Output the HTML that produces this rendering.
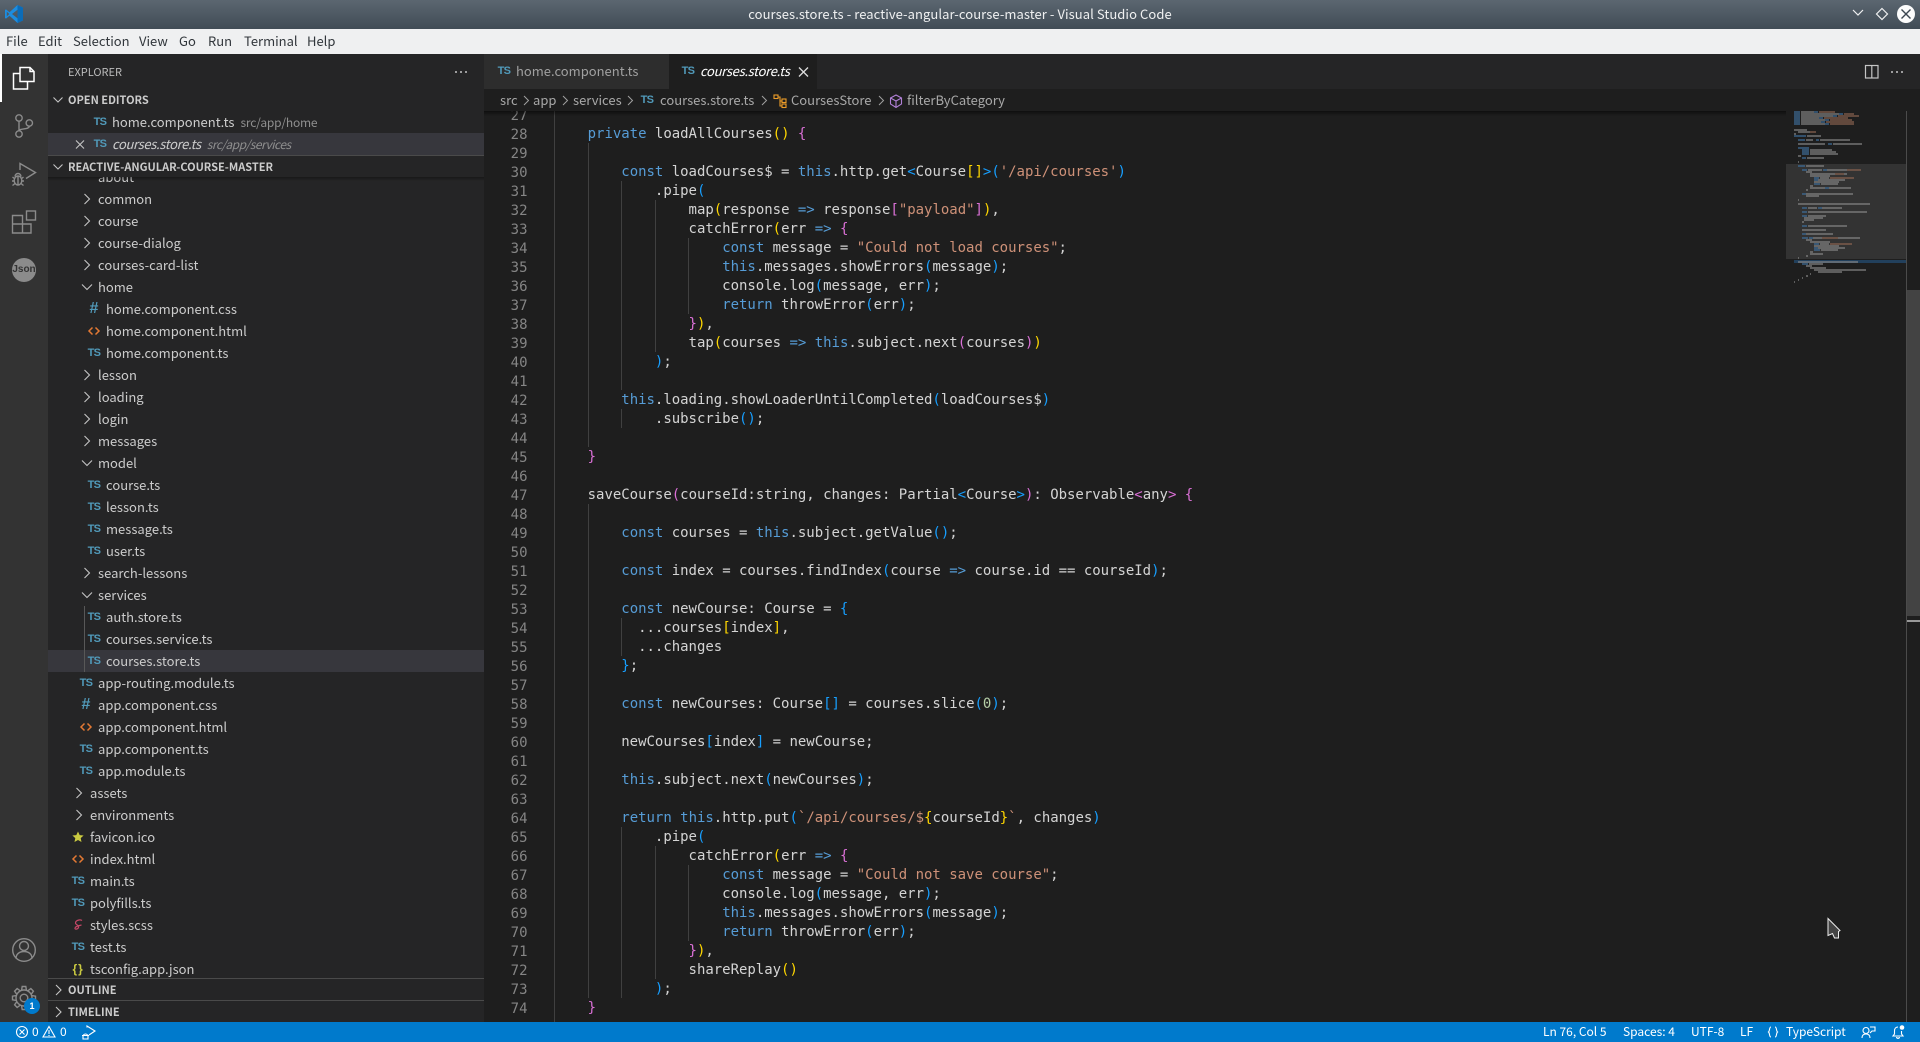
<!DOCTYPE html>
<html><head><meta charset="utf-8"><title>courses.store.ts - VS Code</title>
<style>
html,body{margin:0;padding:0;width:1920px;height:1042px;overflow:hidden;background:#1e1e1e}
body{position:relative;font-family:"Noto Sans CJK JP","Liberation Sans",sans-serif;font-size:13px;color:#ccc}
.a{position:absolute;white-space:pre}
svg{position:absolute;overflow:visible}
#title{left:0;top:0;width:1920px;height:29px;background:linear-gradient(#5b6670,#414c56)}
#menu{left:0;top:29px;width:1920px;height:25px;background:#eff0f1;color:#31363b}
#menu span{position:absolute;top:0;line-height:24px}
#act{left:0;top:54px;width:48px;height:968px;background:#333}
#side{left:48px;top:54px;width:436px;height:968px;background:#252526}
.hd{font-weight:700;font-size:11px;color:#ccc;line-height:22px;height:22px}
.sel{background:#37373d}
#tree{left:48px;top:177px;width:436px;height:801px;overflow:hidden}
.r{position:absolute;left:0;width:436px;height:22px;line-height:22px}
.r span{position:absolute;top:0;white-space:pre}
.ts{font:700 11px/23px "Liberation Sans",sans-serif;letter-spacing:-.6px;color:#519aba;width:20px;text-align:center}
.hash{font:700 16px/22px "Liberation Sans",sans-serif;color:#519aba;width:20px;text-align:center}
.d3{left:58px}.d2{left:50px}.d1{left:42px}
.i3{left:36px}.i2{left:28px}.i1{left:20px}
#tabs{left:484px;top:54px;width:1436px;height:35px;background:#252526}
#bc{left:484px;top:89px;width:1436px;height:22px;background:#1e1e1e;color:#a8a8a8}
#bc span{position:absolute;top:0;line-height:22px;white-space:pre}
#code{left:484px;top:111px;width:1302px;height:911px;overflow:hidden;background:#1e1e1e}
pre{position:absolute;margin:0;font:14px/19px "DejaVu Sans Mono","Liberation Mono",monospace;top:-4px}
#nums{left:0;width:43.5px;text-align:right;color:#858585}
#src{left:70px;top:-5px;color:#d4d4d4;letter-spacing:-.02px}
.k{color:#569cd6}.s{color:#ce9178}.g{color:#ffd700}.p{color:#da70d6}.b{color:#179fff}.n{color:#b5cea8}
.gd{position:absolute;width:1px;background:#404040}
#status{left:0;top:1022px;width:1920px;height:20px;background:#007acc;color:#fff;font-size:12px}
#status span{position:absolute;top:0;line-height:20px;white-space:pre}
</style></head><body>

<div class="a" id="title"></div>
<svg style="left:0;top:0" width="30" height="29"><path fill="#1c8de0" fill-rule="evenodd" d="M17.5 5L23 7.6V20.4L17.5 23L9.5 15.8L6 18.6L5 18V10L6 9.4L9.5 12.2ZM17.5 9.8L12 14L17.5 18.2ZM6.8 11.6V16.4L9.3 14Z"/><path fill="#0b6cb8" d="M17.5 5L23 7.6V20.4L17.5 23Z"/></svg>
<div class="a" style="left:0;top:0;width:1920px;text-align:center;line-height:28px;color:#eff0f1;letter-spacing:.07px">courses.store.ts - reactive-angular-course-master - Visual Studio Code</div>
<svg style="left:1840px;top:0" width="80" height="29">
<path d="M13 10.5L18 15.5L23 10.5" transform="translate(0,-.5)" fill="none" stroke="#eff0f1" stroke-width="1.2"/>
<path d="M42 8.5L47.5 14L42 19.5L36.5 14Z" fill="none" stroke="#eff0f1" stroke-width="1.2"/>
<circle cx="66" cy="14" r="9" fill="#fcfcfc"/><path d="M61.5 9.5L70.5 18.5M70.5 9.5L61.5 18.5" stroke="#3c4650" stroke-width="1.4"/>
</svg>

<div class="a" id="menu">
<span style="left:6px">File</span><span style="left:38px">Edit</span><span style="left:73px">Selection</span><span style="left:139px">View</span><span style="left:179px">Go</span><span style="left:208px">Run</span><span style="left:244px">Terminal</span><span style="left:307px">Help</span>
</div>

<div class="a" id="act"></div>
<div class="a" style="left:0;top:54px;width:2px;height:48px;background:#fff"></div>
<svg style="left:0;top:0" width="48" height="1022" fill="none">
<g stroke="#fff" stroke-width="1.5"><path d="M20 67.5H30L34 71.5V81.5H20Z"/><path d="M30 67.5V71.5H34"/><path d="M20 73.5H13.5V89H27.5V81.5"/></g>
<g stroke="#8b8b8b" stroke-width="1.4">
<circle cx="19" cy="118" r="3.2"/><circle cx="19" cy="134" r="3.2"/><circle cx="29.3" cy="123" r="3.2"/><path d="M19 121.2V130.8M29.3 126.2C29.3 130 19 128 19 131"/>
<path d="M20 170V163.5L35.5 172.5L26 178.5"/><ellipse cx="18" cy="180.5" rx="3.8" ry="4.5"/><path d="M15 176.5A3 3 0 0 1 21 176.5M12.5 177L15 179M23.5 177L21 179M12 181H14.2M24 181H21.8M12.5 185.5L15 183.5M23.5 185.5L21 183.5M18 176V185"/>
<path d="M12.5 215.5H22.5V224H31V233H12.5ZM12.5 224H22.5V233"/><rect x="26.5" y="211" width="9" height="9"/>
<circle cx="24" cy="950" r="11.3"/><circle cx="24" cy="946" r="4.5"/><path d="M16 958.5C16 954 19.5 951.5 24 951.5S32 954 32 958.5"/>
<circle cx="24" cy="998" r="3.8"/><circle cx="24" cy="998" r="8"/>
<g transform="translate(24 998)"><path d="M-2.4 -8L-1.8 -11.5H1.8L2.4 -8"/><path d="M-2.4 -8L-1.8 -11.5H1.8L2.4 -8" transform="rotate(45)"/><path d="M-2.4 -8L-1.8 -11.5H1.8L2.4 -8" transform="rotate(90)"/><path d="M-2.4 -8L-1.8 -11.5H1.8L2.4 -8" transform="rotate(135)"/><path d="M-2.4 -8L-1.8 -11.5H1.8L2.4 -8" transform="rotate(180)"/><path d="M-2.4 -8L-1.8 -11.5H1.8L2.4 -8" transform="rotate(225)"/><path d="M-2.4 -8L-1.8 -11.5H1.8L2.4 -8" transform="rotate(270)"/><path d="M-2.4 -8L-1.8 -11.5H1.8L2.4 -8" transform="rotate(315)"/></g>
</g>
<circle cx="24" cy="270" r="12" fill="#8b8b8b"/>
<circle cx="32" cy="1006" r="8" fill="#007acc"/>
</svg>
<div class="a" style="left:12px;top:260px;width:24px;text-align:center;font:700 10px/20px 'Liberation Sans',sans-serif;color:#333">Json</div>
<div class="a" style="left:24px;top:996px;width:16px;text-align:center;font:700 9px/20px 'Liberation Sans',sans-serif;color:#fff">1</div>

<div class="a" id="side"></div>
<div class="a" style="left:68px;top:54px;line-height:36px;font-size:11px;color:#bbb">EXPLORER</div>
<svg style="left:0;top:0" width="484" height="1022">
<g fill="#c5c5c5"><circle cx="456" cy="72" r="1"/><circle cx="461" cy="72" r="1"/><circle cx="466" cy="72" r="1"/></g>
</svg>
<div class="a hd" style="left:68px;top:89px">OPEN EDITORS</div>
<div class="a" style="left:48px;top:133px;width:436px;height:22px;background:#37373d"></div>
<div class="a ts" style="left:90px;top:111px">TS</div>
<div class="a" style="left:112px;top:111px;line-height:22px">home.component.ts<span style="color:#8f8f8f;margin-left:6px;font-size:12px;letter-spacing:-.2px">src/app/home</span></div>
<div class="a ts" style="left:90px;top:133px">TS</div>
<div class="a" style="left:112px;top:133px;line-height:22px;font-style:italic;letter-spacing:-.35px">courses.store.ts<span style="color:#8f8f8f;margin-left:6px;font-size:12px;letter-spacing:-.5px">src/app/services</span></div>
<div class="a" style="left:48px;top:155px;width:436px;height:1px;background:#4a4a4a"></div>
<div class="a hd" style="left:68px;top:156px">REACTIVE-ANGULAR-COURSE-MASTER</div>
<svg style="left:0;top:0" width="484" height="180" fill="none" stroke="#c5c5c5" stroke-width="1.1">
<path d="M53.5 97.5L58 102L62.5 97.5M53.5 164.5L58 169L62.5 164.5M76 140.5L84 148.5M84 140.5L76 148.5"/>
</svg>

<div class="a" id="tree">
<div class="r" style="top:-11px"><span class="d2">about</span></div>
<div class="r" style="top:11px"><span class="d2">common</span></div>
<div class="r" style="top:33px"><span class="d2">course</span></div>
<div class="r" style="top:55px"><span class="d2">course-dialog</span></div>
<div class="r" style="top:77px"><span class="d2">courses-card-list</span></div>
<div class="r" style="top:99px"><span class="d2">home</span></div>
<div class="r" style="top:121px"><span class="hash i3">#</span><span class="d3">home.component.css</span></div>
<div class="r" style="top:143px"><span class="d3">home.component.html</span></div>
<div class="r" style="top:165px"><span class="ts i3">TS</span><span class="d3">home.component.ts</span></div>
<div class="r" style="top:187px"><span class="d2">lesson</span></div>
<div class="r" style="top:209px"><span class="d2">loading</span></div>
<div class="r" style="top:231px"><span class="d2">login</span></div>
<div class="r" style="top:253px"><span class="d2">messages</span></div>
<div class="r" style="top:275px"><span class="d2">model</span></div>
<div class="r" style="top:297px"><span class="ts i3">TS</span><span class="d3">course.ts</span></div>
<div class="r" style="top:319px"><span class="ts i3">TS</span><span class="d3">lesson.ts</span></div>
<div class="r" style="top:341px"><span class="ts i3">TS</span><span class="d3">message.ts</span></div>
<div class="r" style="top:363px"><span class="ts i3">TS</span><span class="d3">user.ts</span></div>
<div class="r" style="top:385px"><span class="d2">search-lessons</span></div>
<div class="r" style="top:407px"><span class="d2">services</span></div>
<div class="r" style="top:429px"><span class="ts i3">TS</span><span class="d3">auth.store.ts</span></div>
<div class="r" style="top:451px"><span class="ts i3">TS</span><span class="d3">courses.service.ts</span></div>
<div class="r sel" style="top:473px"><span class="ts i3">TS</span><span class="d3">courses.store.ts</span></div>
<div class="r" style="top:495px"><span class="ts i2">TS</span><span class="d2">app-routing.module.ts</span></div>
<div class="r" style="top:517px"><span class="hash i2">#</span><span class="d2">app.component.css</span></div>
<div class="r" style="top:539px"><span class="d2">app.component.html</span></div>
<div class="r" style="top:561px"><span class="ts i2">TS</span><span class="d2">app.component.ts</span></div>
<div class="r" style="top:583px"><span class="ts i2">TS</span><span class="d2">app.module.ts</span></div>
<div class="r" style="top:605px"><span class="d1">assets</span></div>
<div class="r" style="top:627px"><span class="d1">environments</span></div>
<div class="r" style="top:649px"><span class="d1">favicon.ico</span></div>
<div class="r" style="top:671px"><span class="d1">index.html</span></div>
<div class="r" style="top:693px"><span class="ts i1">TS</span><span class="d1">main.ts</span></div>
<div class="r" style="top:715px"><span class="ts i1">TS</span><span class="d1">polyfills.ts</span></div>
<div class="r" style="top:737px"><span class="d1">styles.scss</span></div>
<div class="r" style="top:759px"><span class="ts i1">TS</span><span class="d1">test.ts</span></div>
<div class="r" style="top:781px"><span class="d1">tsconfig.app.json</span><span style="left:24.5px;font:700 12px/22px 'Liberation Sans',sans-serif;letter-spacing:1px;color:#cbcb41">{}</span></div>
<svg style="left:0;top:0" width="436" height="801" fill="none">
<path stroke="#585858" d="M36.5 429V495"/>
<path stroke="#c5c5c5" stroke-width="1.1" d="M36.5 17L41.5 22L36.5 27M36.5 39L41.5 44L36.5 49M36.5 61L41.5 66L36.5 71M36.5 83L41.5 88L36.5 93M34 107.5L39 112.5L44 107.5M36.5 193L41.5 198L36.5 203M36.5 215L41.5 220L36.5 225M36.5 237L41.5 242L36.5 247M36.5 259L41.5 264L36.5 269M34 283.5L39 288.5L44 283.5M36.5 391L41.5 396L36.5 401M34 415.5L39 420.5L44 415.5M28.5 611L33.5 616L28.5 621M28.5 633L33.5 638L28.5 643"/>
<g stroke="#e37933" stroke-width="1.5"><path d="M44.5 150.5L41 154L44.5 157.5M47.5 150.5L51 154L47.5 157.5"/><path d="M36.5 546.5L33 550L36.5 553.5M39.5 546.5L43 550L39.5 553.5"/><path d="M28.5 678.5L25 682L28.5 685.5M31.5 678.5L35 682L31.5 685.5"/></g>
<path fill="#cbcb41" d="M30 654.5l1.7 3.6 3.9.4-2.9 2.6.8 3.9-3.5-2-3.5 2 .8-3.9-2.9-2.6 3.9-.4z"/>
<path stroke="#c44766" stroke-width="1.2" d="M34 743.5c-2-1.5-6.5 0-6.5 2.5c0 2 4 2 3 4.5c-.8 2-4 2.2-3.5.5c.4-1.5 4-2.5 6.5-3"/>
</svg>
</div>
<div class="a" style="left:48px;top:177px;width:436px;height:4px;background:linear-gradient(rgba(0,0,0,.35),rgba(0,0,0,0))"></div>

<div class="a" style="left:48px;top:978px;width:436px;height:44px;background:#252526"></div>
<div class="a" style="left:48px;top:978px;width:436px;height:1px;background:#4a4a4a"></div>
<div class="a" style="left:48px;top:1000px;width:436px;height:1px;background:#4a4a4a"></div>
<div class="a hd" style="left:68px;top:979px">OUTLINE</div>
<div class="a hd" style="left:68px;top:1001px">TIMELINE</div>
<svg style="left:0;top:0" width="484" height="1022" fill="none" stroke="#c5c5c5" stroke-width="1.1"><path d="M56 985L61 990L56 995M56 1007L61 1012L56 1017"/></svg>

<div class="a" id="tabs"></div>
<div class="a" style="left:484px;top:54px;width:185px;height:35px;background:#2d2d2d"></div>
<div class="a" style="left:669px;top:54px;width:148px;height:35px;background:#1e1e1e"></div>
<div class="a ts" style="left:494px;top:60px">TS</div>
<div class="a" style="left:516px;top:54px;line-height:34px;color:#a0a0a0">home.component.ts</div>
<div class="a ts" style="left:678px;top:60px">TS</div>
<div class="a" style="left:700px;top:54px;line-height:34px;color:#fff;font-style:italic;letter-spacing:-.3px">courses.store.ts</div>
<svg style="left:0;top:0" width="1920" height="90" fill="none">
<path stroke="#ddd" stroke-width="1.3" d="M799 67.5L808 76.5M808 67.5L799 76.5"/>
<rect x="1865.5" y="65.5" width="12.5" height="12.5" stroke="#c5c5c5" stroke-width="1.2"/><path stroke="#c5c5c5" stroke-width="1.2" d="M1871.8 65.5V78"/>
<g fill="#c5c5c5"><circle cx="1892" cy="72" r="1"/><circle cx="1897" cy="72" r="1"/><circle cx="1902" cy="72" r="1"/></g>
</svg>

<div class="a" id="bc">
<span style="left:16px">src</span><span style="left:49px">app</span><span style="left:89px">services</span>
<span class="ts" style="left:153px;top:0;line-height:22px">TS</span>
<span style="left:176px">courses.store.ts</span><span style="left:307px">CoursesStore</span><span style="left:423px">filterByCategory</span>
</div>
<svg style="left:0;top:0" width="1100" height="112" fill="none">
<path stroke="#a0a0a0" stroke-width="1" d="M524 96L528.5 100.5L524 105M563 96L567.5 100.5L563 105M628 96L632.5 100.5L628 105M762 96L766.5 100.5L762 105M879 96L883.5 100.5L879 105"/>
<g stroke="#ee9d28" stroke-width="1.1"><rect x="774" y="95" width="4" height="3.5"/><rect x="782" y="99" width="4" height="3.5"/><rect x="782" y="104" width="4" height="3.5"/><path d="M778 97H780V106H782M780 101H782"/></g>
<path stroke="#b180d7" stroke-width="1.1" d="M896 95L901.5 98V104L896 107.5L890.5 104V98ZM890.5 98L896 101L901.5 98M896 101V107.5"/>
</svg>

<div class="a" id="code">
<pre id="nums">27
28
29
30
31
32
33
34
35
36
37
38
39
40
41
42
43
44
45
46
47
48
49
50
51
52
53
54
55
56
57
58
59
60
61
62
63
64
65
66
67
68
69
70
71
72
73
74</pre>
<div class="gd" style="left:70px;top:0;height:911px"></div>
<div class="gd" style="left:104px;top:32px;height:304px"></div>
<div class="gd" style="left:104px;top:393px;height:494px"></div>
<div class="gd" style="left:137px;top:70px;height:209px"></div>
<div class="gd" style="left:137px;top:298px;height:19px"></div>
<div class="gd" style="left:137px;top:507px;height:38px"></div>
<div class="gd" style="left:137px;top:716px;height:171px"></div>
<div class="gd" style="left:171px;top:89px;height:152px"></div>
<div class="gd" style="left:171px;top:735px;height:133px"></div>
<div class="gd" style="left:204px;top:127px;height:76px"></div>
<div class="gd" style="left:204px;top:754px;height:76px"></div>
<pre id="src">

    <span class="k">private</span> loadAllCourses<span class="g">()</span> <span class="p">{</span>

        <span class="k">const</span> loadCourses$ = <span class="k">this</span>.http.get<span class="b">&lt;</span>Course<span class="g">[]</span><span class="b">&gt;(</span><span class="s">'/api/courses'</span><span class="b">)</span>
            .pipe<span class="b">(</span>
                map<span class="g">(</span>response <span class="k">=&gt;</span> response<span class="p">[</span><span class="s">"payload"</span><span class="p">]</span><span class="g">)</span>,
                catchError<span class="g">(</span>err <span class="k">=&gt;</span> <span class="p">{</span>
                    <span class="k">const</span> message = <span class="s">"Could not load courses"</span>;
                    <span class="k">this</span>.messages.showErrors<span class="b">(</span>message<span class="b">)</span>;
                    console.log<span class="b">(</span>message, err<span class="b">)</span>;
                    <span class="k">return</span> throwError<span class="b">(</span>err<span class="b">)</span>;
                <span class="p">}</span><span class="g">)</span>,
                tap<span class="g">(</span>courses <span class="k">=&gt;</span> <span class="k">this</span>.subject.next<span class="p">(</span>courses<span class="p">)</span><span class="g">)</span>
            <span class="b">)</span>;

        <span class="k">this</span>.loading.showLoaderUntilCompleted<span class="b">(</span>loadCourses$<span class="b">)</span>
            .subscribe<span class="b">()</span>;

    <span class="p">}</span>

    saveCourse<span class="p">(</span>courseId:string, changes: Partial<span class="b">&lt;</span>Course<span class="b">&gt;</span><span class="p">)</span>: Observable<span class="p">&lt;</span>any<span class="p">&gt;</span> <span class="p">{</span>

        <span class="k">const</span> courses = <span class="k">this</span>.subject.getValue<span class="b">()</span>;

        <span class="k">const</span> index = courses.findIndex<span class="b">(</span>course <span class="k">=&gt;</span> course.id == courseId<span class="b">)</span>;

        <span class="k">const</span> newCourse: Course = <span class="b">{</span>
          ...courses<span class="g">[</span>index<span class="g">]</span>,
          ...changes
        <span class="b">}</span>;

        <span class="k">const</span> newCourses: Course<span class="b">[]</span> = courses.slice<span class="b">(</span><span class="n">0</span><span class="b">)</span>;

        newCourses<span class="b">[</span>index<span class="b">]</span> = newCourse;

        <span class="k">this</span>.subject.next<span class="b">(</span>newCourses<span class="b">)</span>;

        <span class="k">return</span> <span class="k">this</span>.http.put<span class="b">(</span><span class="s">`/api/courses/$</span><span class="g">{</span>courseId<span class="g">}</span><span class="s">`</span>, changes<span class="b">)</span>
            .pipe<span class="b">(</span>
                catchError<span class="g">(</span>err <span class="k">=&gt;</span> <span class="p">{</span>
                    <span class="k">const</span> message = <span class="s">"Could not save course"</span>;
                    console.log<span class="b">(</span>message, err<span class="b">)</span>;
                    <span class="k">this</span>.messages.showErrors<span class="b">(</span>message<span class="b">)</span>;
                    <span class="k">return</span> throwError<span class="b">(</span>err<span class="b">)</span>;
                <span class="p">}</span><span class="g">)</span>,
                shareReplay<span class="g">()</span>
            <span class="b">)</span>;
    <span class="p">}</span></pre>
</div>
<div class="a" style="left:484px;top:111px;width:1302px;height:5px;background:linear-gradient(rgba(0,0,0,.5),rgba(0,0,0,0))"></div>

<div class="a" style="left:1786px;top:164px;width:120px;height:95px;background:#333"></div>
<div class="a" style="left:1794px;top:260px;width:112px;height:3px;background:#22405c"></div>
<svg style="left:1794px;top:0" width="112" height="290" fill="none" stroke-width="1.2">
<path stroke="#3f6f9b" d="M0 112h6M20 112h4M0 114h6M45 114h4M0 116h6M39 116h4M0 118h6M25 118h4M0 120h6M31 120h4M0 122h6M27 122h4M0 124h6M31 124h4M0 136h12M4 140h7M22 140h3M34 144h4M4 148h11M8 150h7M8 152h7M8 154h7M8 158h4M4 166h7M8 170h5M29 170h4M20 178h5M20 180h4M20 184h6M31 188h4M8 194h4M8 208h5M24 208h4M8 212h5M8 216h5M8 226h5M8 234h4M8 238h6M15 238h4M20 244h5M20 248h4M20 250h6M8 264h6"/>
<path stroke="#858585" d="M7 112h13M7 114h38M7 116h32M7 118h18M7 120h24M7 122h20M7 124h24M0 130h13M4 132h12M0 134h2M13 136h14M12 140h7M26 140h30M4 144h27M39 144h29M16 150h22M16 152h26M16 154h28M4 156h3M13 158h17M4 162h1M12 166h18M14 170h14M33 170h20M12 172h6M16 174h25M50 174h3M16 176h20M26 178h9M24 180h27M20 182h25M27 184h17M16 186h3M16 188h15M35 188h22M12 190h2M12 194h47M12 196h13M4 200h1M4 204h72M14 208h9M28 208h20M14 212h59M14 216h18M10 218h19M10 220h10M8 222h2M14 226h39M8 230h24M12 234h27M19 238h9M44 238h22M12 240h6M16 242h20M26 244h9M20 246h25M24 248h27M27 250h17M16 252h3M16 254h13M12 256h2M4 258h1M4 262h60M15 264h14M12 266h6M16 268h16M20 270h52M24 272h24M16 274h1M12 276h2M8 278h1M4 280h1M0 282h1"/>
<path stroke="#8a6350" d="M25 112h16M50 114h10M44 116h21M30 118h24M36 120h22M32 122h28M36 124h24M16 132h6M53 170h14M41 174h9M36 178h24M28 238h16M36 244h22"/>
</svg>

<div class="a" style="left:1906px;top:111px;width:1px;height:911px;background:#4b4b4b"></div>
<div class="a" style="left:1907px;top:290px;width:13px;height:326px;background:#434343"></div>
<div class="a" style="left:1907px;top:620px;width:13px;height:2px;background:#999"></div>

<svg style="left:0;top:0" width="1920" height="1022"><path fill="#444" stroke="#eee" stroke-width="1" d="M1828 918.5V935.5L1832.5 933.5L1834.5 938H1838.5V931.5L1840 930.5Z"/></svg>

<div class="a" id="status">
<span style="left:32px">0</span><span style="left:60px">0</span>
<span style="left:1543px">Ln 76, Col 5</span><span style="left:1623px">Spaces: 4</span><span style="left:1691px">UTF-8</span><span style="left:1740px">LF</span><span style="left:1786px">TypeScript</span>
</div>
<svg style="left:0;top:1022px" width="1920" height="20" fill="none" stroke="#fff" stroke-width="1.1">
<circle cx="22" cy="10" r="5.5"/><path d="M19.5 7.5L24.5 12.5M24.5 7.5L19.5 12.5"/>
<path d="M49 4.5L55 15H43ZM49 8V12M49 13V14"/>
<path d="M87 5.5V4L95 9L89 13M83 14.5A2.5 2.5 0 0 1 88 14.5V17H83ZM82 13.5L89 13.5"/>
<path d="M1771 5C1769 5 1770 9 1768.5 10C1770 11 1769 15 1771 15M1775 5C1777 5 1776 9 1777.5 10C1776 11 1777 15 1775 15"/>
<path d="M1866 5.5A3 3 0 1 1 1866 11.5A3 3 0 1 1 1866 5.5M1862 16C1862 13 1864 12 1866 12C1868 12 1870 13 1870 16M1870 5H1875V9H1872L1870 11"/>
<path d="M1898 5C1895.5 5 1894.5 7 1894.5 9V12L1893 14H1903L1901.5 12V9M1896.5 15C1896.8 16.8 1899.2 16.8 1899.5 15"/>
<circle cx="1902" cy="5.5" r="2.3" fill="#fff" stroke="none"/>
</svg>

</body></html>
